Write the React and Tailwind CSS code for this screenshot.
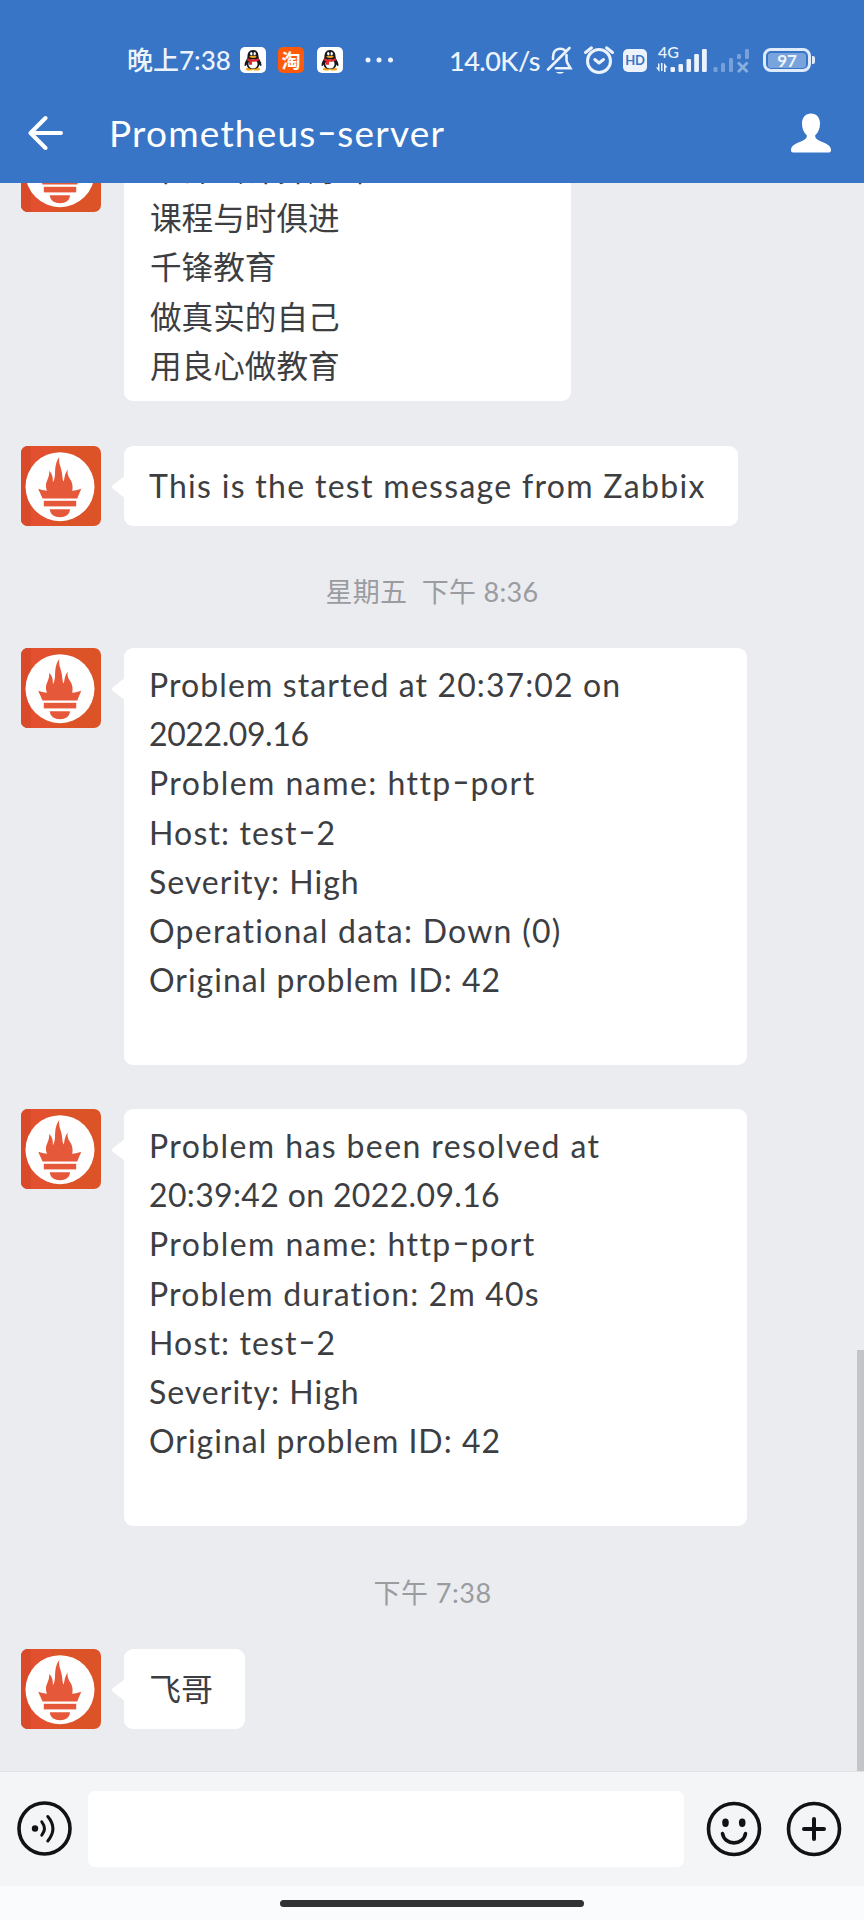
function Avatar() {
  return (
    <svg viewBox="0 0 80 80" className="size-20 shrink-0 rounded-[7px]">
      <rect width="80" height="80" fill="#dc5328" />
      <rect width="30" height="80" fill="#e2502f" />
      <rect width="10" height="80" fill="#d94a2b" />
      <circle cx="39" cy="40.7" r="34.5" fill="#fff" />
      <g fill="#e5583a">
        <path d="M29.5 50C26 46 24.500 42.500 25 38.500C25.500 34.500 28.500 31.500 28.300 24.800C31.200 28 32.300 32 31.800 36C32.600 36 33.800 32 34 28C34.200 22.500 34.300 16 38.300 11C37.300 16.500 39.600 20 40.600 25C41.500 29.500 41.400 34 42.600 35.500C43.700 33 43.200 28 46.800 23.500C45.800 29 48.300 31.500 50 34.500C52.500 40 52 45.500 48.500 50Z" />
        <path d="M17.300 42.800C23 44.800 26.500 45 30 45V48.500H48V45C52 45 55.500 44.600 60.200 42.800C59 46.500 57 50 56.300 52.500H21.500C20.700 50 18.600 46.500 17.300 42.800Z" />
        <rect x="22.800" y="54.800" width="32.400" height="5.600" />
        <path d="M28.800 63.300H49C48.800 68.500 44.500 71.300 39 71.300S29 68.500 28.800 63.300Z" />
      </g>
    </svg>
  );
}

function Message({ children, className = "" }) {
  return (
    <div className="flex items-start pl-[21px]">
      <Avatar />
      <svg viewBox="0 0 14 22" className="ml-[10px] mt-[30px] h-[22px] w-[14px] shrink-0">
        <path d="M14 0L2 9Q0 11 2 13L14 22Z" fill="#fff" />
      </svg>
      <div
        className={`-ml-px rounded-[9px] bg-white pl-[25px] text-[32px] leading-[49.2px] text-[#3d3e42] ${className}`}
      >
        {children}
      </div>
    </div>
  );
}

function Line({ children, className = "" }) {
  return <div className={`whitespace-pre [font-variant-ligatures:none] ${className}`}>{children}</div>;
}

function Hyphen() {
  return <span className="mx-[3.5px] inline-block origin-center -translate-y-[2px] scale-x-150 tracking-normal">-</span>;
}

function PenguinIcon() {
  return (
    <svg viewBox="0 0 26 26" className="size-[26px]">
      <rect width="26" height="26" rx="5" fill="#fff" />
      <ellipse cx="9.500" cy="22" rx="3.600" ry="1.600" fill="#f3a51c" />
      <ellipse cx="16.500" cy="22" rx="3.600" ry="1.600" fill="#f3a51c" />
      <path d="M13 3C9 3 7.500 6 7.500 9.500C7.500 12 4.500 14.500 4.500 18C4.500 19.500 5.500 19.500 6.500 17.500C7 20.500 9 22 13 22S19 20.500 19.500 17.500C20.500 19.500 21.500 19.500 21.500 18C21.500 14.500 18.500 12 18.500 9.500C18.500 6 17 3 13 3Z" fill="#17171b" />
      <ellipse cx="13" cy="17" rx="4.600" ry="4.600" fill="#fff" />
      <ellipse cx="11.300" cy="6.700" rx="1.200" ry="1.700" fill="#fff" />
      <ellipse cx="14.700" cy="6.700" rx="1.200" ry="1.700" fill="#fff" />
      <ellipse cx="13" cy="9.800" rx="3.600" ry="1.100" fill="#f3a51c" />
      <path d="M7.500 11C10.500 13 15.500 13 18.500 11L19 13.500C16.500 14.700 14 15 12 14.800V17.800H9V14.200L7 13.500Z" fill="#e2282f" />
    </svg>
  );
}

function StatusBar() {
  return (
    <div className="flex h-[86px] items-center pl-[127px] pt-[34px] text-[#edf3fc]">
      <span className="w-[113px] whitespace-nowrap text-[26px] font-medium leading-none">晚上7:38</span>
      <PenguinIcon />
      <span className="ml-[12px] flex size-[26px] items-center justify-center rounded-[5px] bg-[#ff5a0a] text-[19px] font-bold leading-none text-white">
        淘
      </span>
      <span className="ml-[13px]">
        <PenguinIcon />
      </span>
      <svg viewBox="0 0 30 8" className="ml-[21px] h-[8px] w-[30px]" fill="currentColor">
        <circle cx="4" cy="4" r="2.500" />
        <circle cx="15" cy="4" r="2.500" />
        <circle cx="26.500" cy="4" r="2.500" />
      </svg>
      <span className="ml-[55px] w-[98px] whitespace-nowrap text-[27px] font-medium leading-none tracking-[-0.5px]">
        14.0K/s
      </span>
      <svg viewBox="0 0 28 30" className="-ml-px h-[30px] w-[28px]" fill="none" stroke="currentColor" strokeWidth="2.600" strokeLinecap="round">
        <path d="M19 5.500C16.500 3 11.500 3 8.800 6C7.200 8 7 10 7 14" />
        <path d="M20.500 10V15C20.500 18 22.500 20 24.500 23.300H10" />
        <path d="M2 24.500L23.500 3" />
        <path d="M10 27H18C16.500 29.300 11.500 29.300 10 27Z" fill="currentColor" stroke="none" />
      </svg>
      <svg viewBox="0 0 32 30" className="ml-[9px] h-[30px] w-[32px]" fill="none" stroke="currentColor" strokeWidth="3" strokeLinecap="round" strokeLinejoin="round">
        <circle cx="16" cy="16" r="11.500" />
        <path d="M2.500 7.500L8.500 2.800M29.500 7.500L23.500 2.800" />
        <path d="M11.800 14.500L16 18L20.500 14.500" />
      </svg>
      <span className="ml-[8px] flex h-[23px] w-[24px] items-center justify-center rounded-[5px] bg-[#edf3fc] text-[13px] font-bold leading-none tracking-[-0.3px] text-[#3875c6]">
        HD
      </span>
      <div className="relative ml-[9px] h-[28px] w-[94px]">
        <span className="absolute left-[2px] top-[-2px] text-[16px] font-medium leading-none">4G</span>
        <svg viewBox="0 0 94 28" className="h-[28px] w-[94px]" fill="currentColor">
          <path d="M3.500 17.500V26L0 21.500H2V17.500ZM5 17V25H6.500V17ZM8 26V17L11.500 21.500H9.600V26Z" />
          <rect x="14.500" y="21" width="4.500" height="5" rx="1.200" />
          <rect x="22.500" y="18" width="4.500" height="8" rx="1.200" />
          <rect x="30.500" y="13" width="4.500" height="13" rx="1.200" />
          <rect x="38.200" y="8" width="4.700" height="18" rx="1.200" />
          <rect x="46" y="3" width="4.800" height="23" rx="1.200" />
          <g opacity="0.35">
            <rect x="57.500" y="21" width="4" height="5" rx="1.200" />
            <rect x="65" y="17" width="4" height="9" rx="1.200" />
            <rect x="73" y="12" width="4" height="14" rx="1.200" />
            <rect x="81" y="8" width="4" height="5" rx="1.200" />
            <rect x="89" y="3" width="4" height="10" rx="1.200" />
          </g>
          <path d="M82 16.500L91.500 26M91.500 16.500L82 26" stroke="currentColor" strokeWidth="2.800" opacity="0.45" />
        </svg>
      </div>
      <div className="ml-[13px] flex h-[24px] w-[48px] items-center justify-center rounded-[8px] border-[3px] border-[#dfeafa] p-[2px]">
        <span className="flex h-[15px] w-full items-center justify-center rounded-[3px] bg-[#79a3dd] text-[17px] font-bold leading-none">
          97
        </span>
      </div>
      <span className="ml-px h-[8px] w-[3px] rounded-r-[2px] bg-[#dfeafa]" />
    </div>
  );
}

function Header() {
  return (
    <header className="relative z-10 h-[183px] shrink-0 bg-[#3875c6]">
      <StatusBar />
      <div className="flex h-[93px] items-center pl-[28px] pr-[32px] text-white">
        <svg viewBox="0 0 36 36" className="size-[36px]" fill="none" stroke="currentColor" strokeWidth="4" strokeLinecap="round" strokeLinejoin="round">
          <path d="M17.500 3L2.500 18L17.500 33M3 18H33" />
        </svg>
        <h1 className="ml-[45px] whitespace-nowrap text-[37px] leading-none tracking-[1.2px]">
          Prometheus<Hyphen />server
        </h1>
        <svg viewBox="0 0 42 40" className="ml-auto h-[40px] w-[42px]" fill="currentColor">
          <path d="M21 0.500C15.500 0.500 12 4.500 12 10.500C12 16 14 20 16.800 22.300C17.300 25 15.500 26.500 12 28C6 30.500 1 32.500 1 37V37.500Q1 39.500 3 39.500H39Q41 39.500 41 37.500V37C41 32.500 36 30.500 30 28C26.500 26.500 24.700 25 25.200 22.300C28 20 30 16 30 10.500C30 4.500 26.500 0.500 21 0.500Z" />
        </svg>
      </div>
    </header>
  );
}

function Composer() {
  return (
    <footer className="shrink-0">
      <div className="flex h-[115px] items-center border-t border-[#dfe1e4] bg-[#f4f5f7] pl-[17px] pr-[22px]">
        <svg viewBox="0 0 56 56" className="size-[56px]" fill="none" stroke="#101215" strokeWidth="3.600" strokeLinecap="round">
          <circle cx="27.500" cy="27.500" r="25.500" />
          <circle cx="18" cy="27.500" r="3.200" fill="#101215" stroke="none" />
          <path d="M24.800 20.800Q30 27.500 24.800 34.200M30.800 15.500Q41 27.500 30.800 40" strokeWidth="3" />
        </svg>
        <div className="ml-[15px] h-[76px] w-[596px] rounded-[7px] bg-white" />
        <svg viewBox="0 0 56 56" className="ml-[22px] size-[56px]" fill="none" stroke="#101215" strokeWidth="3.600" strokeLinecap="round">
          <circle cx="28" cy="28" r="25.500" />
          <ellipse cx="19.500" cy="21.800" rx="3.300" ry="4.200" fill="#101215" stroke="none" />
          <ellipse cx="36.200" cy="21.800" rx="3.300" ry="4.200" fill="#101215" stroke="none" />
          <path d="M16.500 32.500C18.500 45 37.500 45 39.500 32.500" />
        </svg>
        <svg viewBox="0 0 56 56" className="ml-[24px] size-[56px]" fill="none" stroke="#101215" strokeWidth="3.600" strokeLinecap="round">
          <circle cx="28" cy="28" r="25.500" />
          <path d="M18 28H38M28 18V38" strokeWidth="4" />
        </svg>
      </div>
      <div className="flex h-[34px] justify-center bg-[#fafbfd] pt-[14px]">
        <div className="h-[7px] w-[304px] rounded-full bg-[#303133]" />
      </div>
    </footer>
  );
}

export default function App() {
  return (
    <div
      lang="zh-CN"
      className="flex h-[1920px] w-[864px] flex-col overflow-hidden bg-[#eaecf0] font-['Lato','Noto_Sans_CJK_SC',sans-serif]"
    >
      <Header />
      <main className="relative flex min-h-0 flex-1 flex-col justify-end overflow-hidden pb-[42px]">
        <Message className="h-[269px] w-[447px] pt-[13px]">
          <div className="pl-px text-[31.600px]">
            <Line>千锋云计算好课</Line>
            <Line>课程与时俱进</Line>
            <Line>千锋教育</Line>
            <Line>做真实的自己</Line>
            <Line>用良心做教育</Line>
          </div>
        </Message>
        <div className="h-[45px] shrink-0" />
        <Message className="flex h-[80px] w-[614px] items-center">
          <Line className="tracking-[1.3px]">This is the test message from Zabbix</Line>
        </Message>
        <div className="flex h-[122px] shrink-0 items-center justify-center whitespace-pre pt-[11px] text-[27px] tracking-[0.3px] text-[#9a9ca0]">
          星期五  下午 8:36
        </div>
        <Message className="h-[417px] w-[623px] pt-[12px]">
          <Line className="tracking-[1.1px]">Problem started at 20:37:02 on</Line>
          <Line className="tracking-[-0.4px]">2022.09.16</Line>
          <Line className="tracking-[1.45px]">
            Problem name: http<Hyphen />port
          </Line>
          <Line className="tracking-[1.15px]">
            Host: test<Hyphen />2
          </Line>
          <Line className="tracking-[1px]">Severity: High</Line>
          <Line className="tracking-[1.25px]">Operational data: Down (0)</Line>
          <Line className="tracking-[1px]">Original problem ID: 42</Line>
        </Message>
        <div className="h-[44px] shrink-0" />
        <Message className="h-[417px] w-[623px] pt-[12px]">
          <Line className="tracking-[1.4px]">Problem has been resolved at</Line>
          <Line className="tracking-[0.35px]">20:39:42 on 2022.09.16</Line>
          <Line className="tracking-[1.45px]">
            Problem name: http<Hyphen />port
          </Line>
          <Line className="tracking-[1.15px]">Problem duration: 2m 40s</Line>
          <Line className="tracking-[1.15px]">
            Host: test<Hyphen />2
          </Line>
          <Line className="tracking-[1px]">Severity: High</Line>
          <Line className="tracking-[1px]">Original problem ID: 42</Line>
        </Message>
        <div className="flex h-[123px] shrink-0 items-center justify-center whitespace-pre pt-[12px] pl-px text-[27px] tracking-[0.5px] text-[#9a9ca0]">
          下午 7:38
        </div>
        <Message className="flex h-[80px] w-[121px] items-center">
          <Line>飞哥</Line>
        </Message>
        <div className="absolute bottom-0 right-0 h-[421px] w-[7px] bg-[#c4c5c6]" />
      </main>
      <Composer />
    </div>
  );
}
